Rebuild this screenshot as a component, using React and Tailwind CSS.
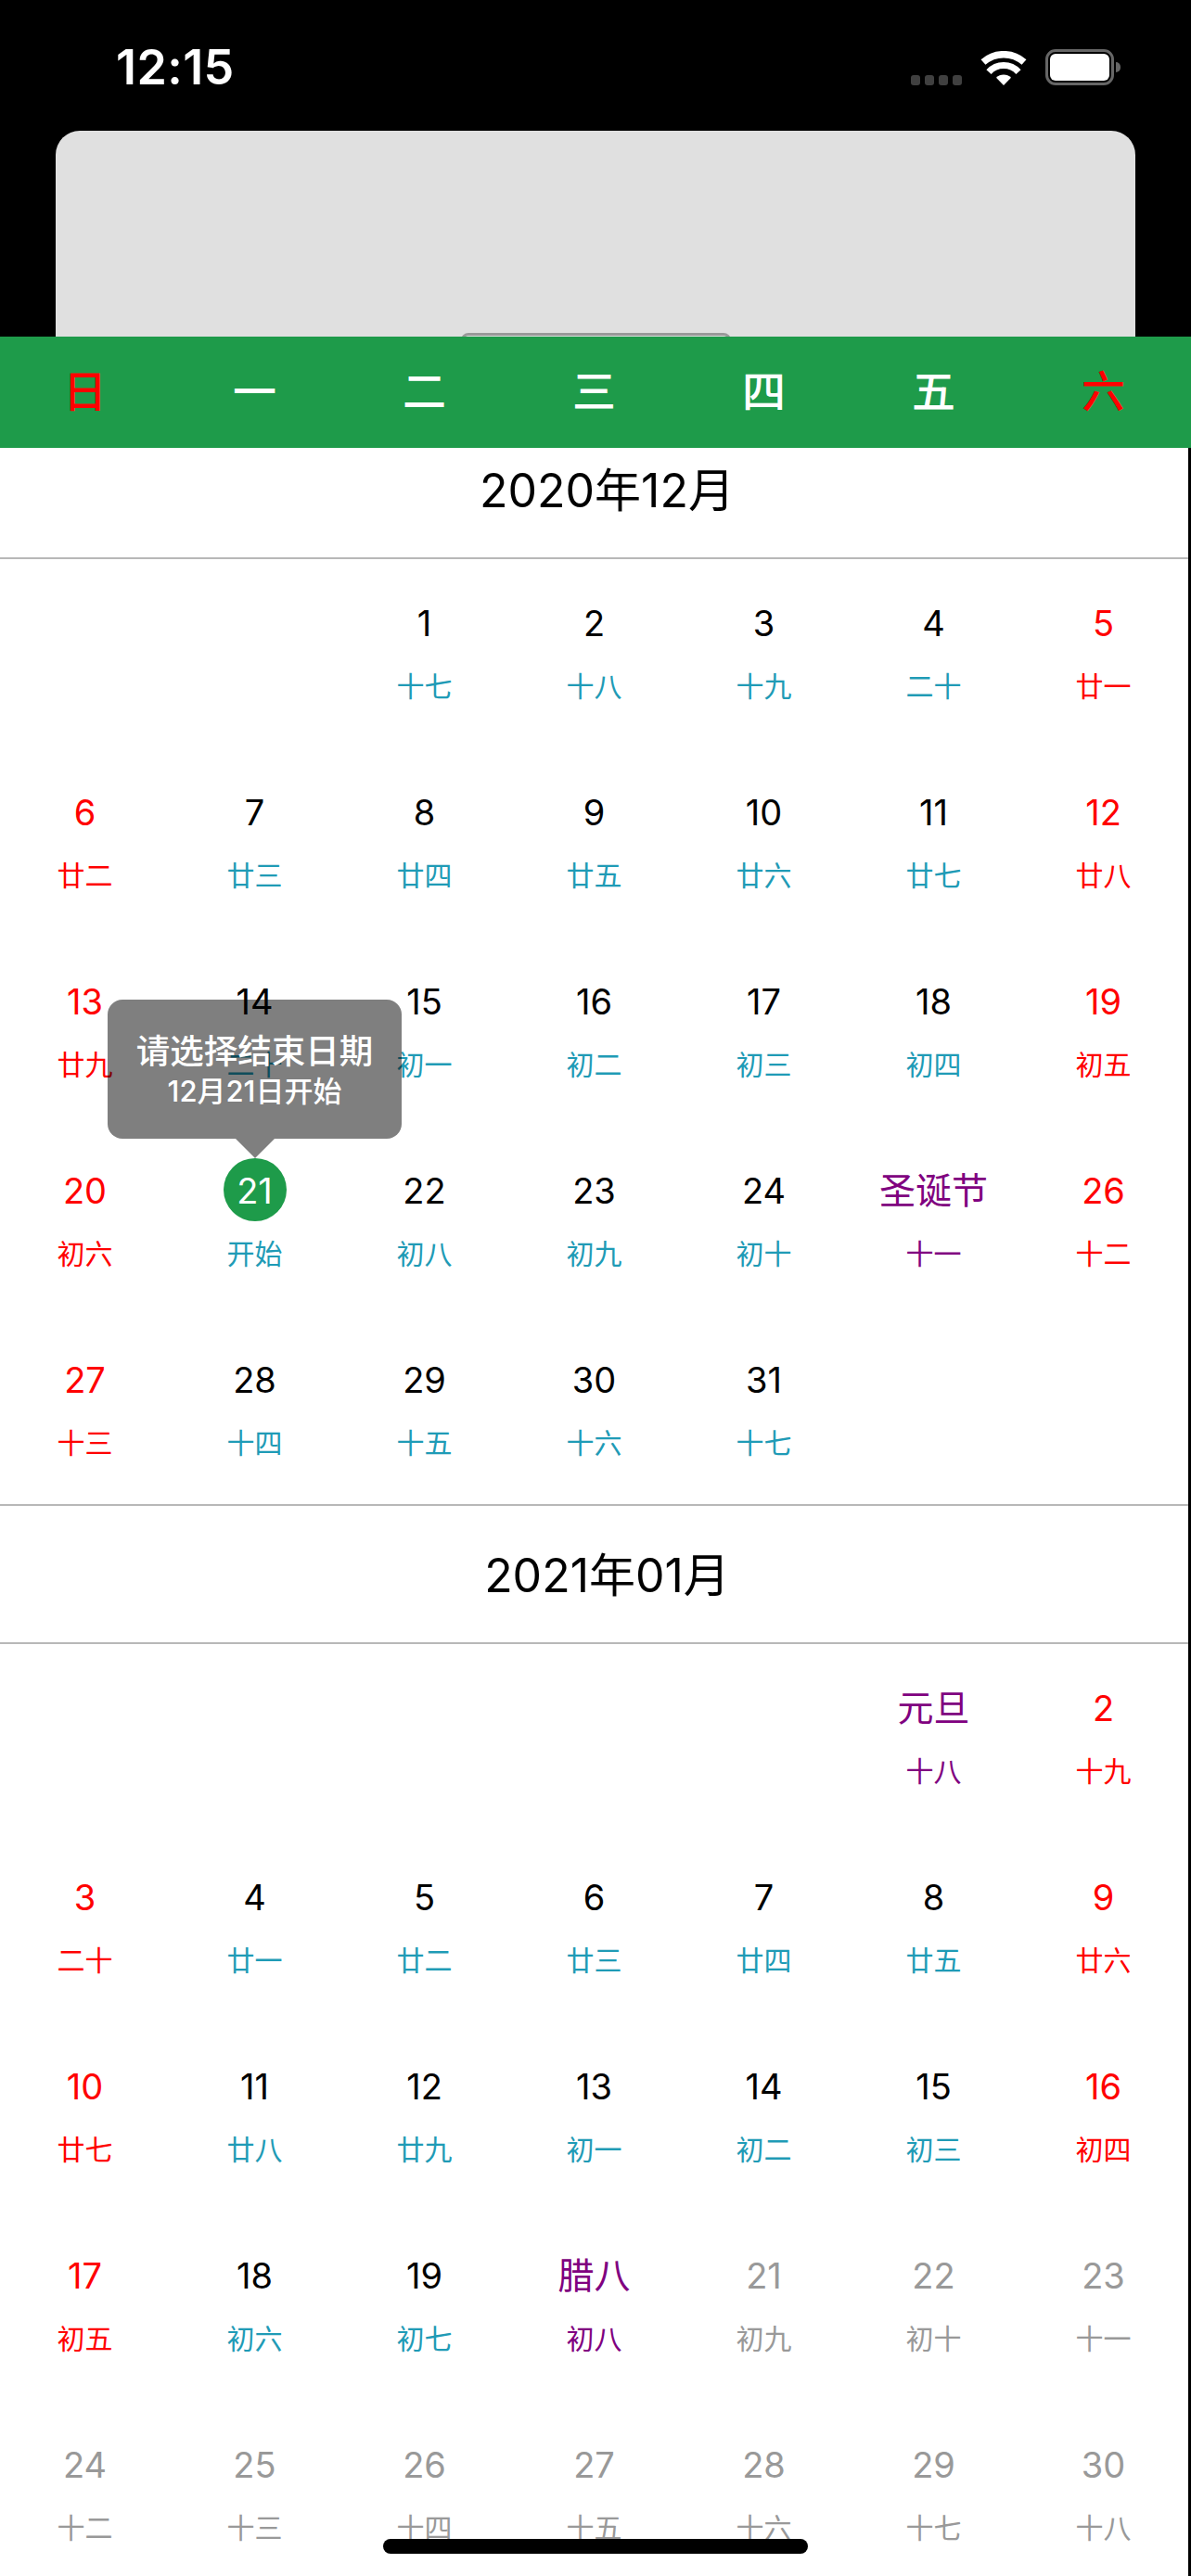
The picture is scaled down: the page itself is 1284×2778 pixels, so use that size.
const GREEN = "bg-[#1e9b4a]";
const FONT = { fontFamily: 'Inter, "Noto Sans CJK SC", sans-serif' };

const TONE = {
  n: ["text-black", "text-[#1f9bb6]"],
  w: ["text-[#ff0000]", "text-[#ff0000]"],
  h: ["text-[#800080]", "text-[#800080]"],
  g: ["text-[#999999]", "text-[#999999]"],
};

function c(top, lunar, tone, extra) {
  return { top, lunar, tone, ...extra };
}

const december = [
  null, null,
  c("1", "十七", "n"), c("2", "十八", "n"), c("3", "十九", "n"), c("4", "二十", "n"), c("5", "廿一", "w"),
  c("6", "廿二", "w"), c("7", "廿三", "n"), c("8", "廿四", "n"), c("9", "廿五", "n"), c("10", "廿六", "n"), c("11", "廿七", "n"), c("12", "廿八", "w"),
  c("13", "廿九", "w"), c("14", "二十", "n"), c("15", "初一", "n"), c("16", "初二", "n"), c("17", "初三", "n"), c("18", "初四", "n"), c("19", "初五", "w"),
  c("20", "初六", "w"), c("21", "开始", "n", { selected: true }), c("22", "初八", "n"), c("23", "初九", "n"), c("24", "初十", "n"), c("圣诞节", "十一", "h", { holiday: true }), c("26", "十二", "w"),
  c("27", "十三", "w"), c("28", "十四", "n"), c("29", "十五", "n"), c("30", "十六", "n"), c("31", "十七", "n"), null, null,
];

const january = [
  null, null, null, null, null,
  c("元旦", "十八", "h", { holiday: true }), c("2", "十九", "w"),
  c("3", "二十", "w"), c("4", "廿一", "n"), c("5", "廿二", "n"), c("6", "廿三", "n"), c("7", "廿四", "n"), c("8", "廿五", "n"), c("9", "廿六", "w"),
  c("10", "廿七", "w"), c("11", "廿八", "n"), c("12", "廿九", "n"), c("13", "初一", "n"), c("14", "初二", "n"), c("15", "初三", "n"), c("16", "初四", "w"),
  c("17", "初五", "w"), c("18", "初六", "n"), c("19", "初七", "n"), c("腊八", "初八", "h", { holiday: true }), c("21", "初九", "g"), c("22", "初十", "g"), c("23", "十一", "g"),
  c("24", "十二", "g"), c("25", "十三", "g"), c("26", "十四", "g"), c("27", "十五", "g"), c("28", "十六", "g"), c("29", "十七", "g"), c("30", "十八", "g"),
];

function Tooltip() {
  return (
    <div className="absolute left-[-67px] bottom-[170px] z-10 flex w-[317px] flex-col items-center">
      <div className="flex h-[150px] w-full flex-col items-center justify-center rounded-[16px] bg-black/50 pt-[2px] text-white">
        <div className="text-[36.5px] font-medium leading-[46px]">请选择结束日期</div>
        <div className="text-[31px] font-medium leading-[40px]">12月21日开始</div>
      </div>
      <div className="h-0 w-0 border-x-[21px] border-t-[21px] border-x-transparent border-t-black/50" />
    </div>
  );
}

function Cell({ day }) {
  if (!day) return <div className="h-[204px]" />;
  const [numColor, lunarColor] = TONE[day.tone];
  return (
    <div className="relative flex h-[204px] flex-col items-center pt-[34px]">
      {day.selected && <Tooltip />}
      <div className="flex h-[68px] items-center justify-center">
        {day.selected ? (
          <div className={`flex h-[68px] w-[68px] items-center justify-center rounded-full pt-[2px] ${GREEN} text-[38px] text-white`}>
            {day.top}
          </div>
        ) : (
          <span className={`${day.holiday ? "text-[39px]" : "text-[38px]"} pt-[3px] ${numColor}`}>{day.top}</span>
        )}
      </div>
      <div className={`flex h-[68px] items-center justify-center pt-[3px] text-[30px] ${lunarColor}`}>{day.lunar}</div>
    </div>
  );
}

function Month({ title, days, first }) {
  return (
    <section>
      <div
        className={`flex items-center justify-center border-[#b8b8b8] ${
          first ? "h-[120px] border-b-2 pb-[26px]" : "-mt-px h-[151px] border-y-2 pt-[4px]"
        } pl-[28px] text-[50px] text-black`}
      >
        {title}
      </div>
      <div className="grid grid-cols-7">
        {days.map((d, i) => (
          <Cell key={i} day={d} />
        ))}
      </div>
    </section>
  );
}

function Wifi() {
  return (
    <svg width="50" height="37" viewBox="0 0 50 37" className="mr-[20px]">
      <path d="M3 12 A33.25 33.25 0 0 1 47 12" fill="none" stroke="#fff" strokeWidth="7.5" />
      <path d="M9 22.6 A21.5 21.5 0 0 1 41 22.6" fill="none" stroke="#fff" strokeWidth="7" />
      <path d="M25 37 L17 28.7 A11.5 11.5 0 0 1 33 28.7 Z" fill="#fff" />
    </svg>
  );
}

function StatusBar() {
  return (
    <div className="flex h-[141px] items-start justify-between pl-[125px] pr-[76px] pt-[47px]">
      <span className="text-[52px] font-semibold leading-[52px] tracking-[0.4px] text-white">12:15</span>
      <div className="flex items-end pt-[6px]">
        <div className="mr-[20px] flex gap-[5px]">
          {[0, 1, 2, 3].map((i) => (
            <div key={i} className="h-[11px] w-[10px] rounded-[3px] bg-[#404040]" />
          ))}
        </div>
        <Wifi />
        <div className="flex items-center gap-[2px]">
          <div className="h-[39px] w-[74px] rounded-[11px] border-[3px] border-[#666666] p-[2px]">
            <div className="h-full w-full rounded-[6px] bg-white" />
          </div>
          <div className="h-[11px] w-[5px] rounded-r-[5px] bg-[#666666]" />
        </div>
      </div>
    </div>
  );
}

export default function App() {
  return (
    <div className="relative h-[2778px] w-[1284px] overflow-hidden bg-black" style={FONT}>
      <div className="h-[363px] overflow-hidden">
        <StatusBar />
        <div className="mx-[60px] flex h-[222px] justify-center rounded-t-[26px] bg-[#e0e0e0] pt-[218px]">
          <div className="h-[8px] w-[291px] rounded-t-[8px] border-[3px] border-[#999999]" />
        </div>
      </div>
      <div className={`grid h-[120px] grid-cols-7 pr-[3px] ${GREEN}`}>
        {["日", "一", "二", "三", "四", "五", "六"].map((w, i) => (
          <div
            key={w}
            className={`flex items-center justify-center pb-[2px] text-[47px] font-medium ${
              i === 0 || i === 6 ? "text-[#ff0000]" : "text-white"
            }`}
          >
            {w}
          </div>
        ))}
      </div>
      <div className="h-[2295px] w-[1281px] overflow-hidden bg-white">
        <Month title="2020年12月" days={december} first />
        <Month title="2021年01月" days={january} />
      </div>
      <div className="absolute bottom-[24px] left-[413px] h-[16px] w-[458px] rounded-full bg-black" />
    </div>
  );
}
